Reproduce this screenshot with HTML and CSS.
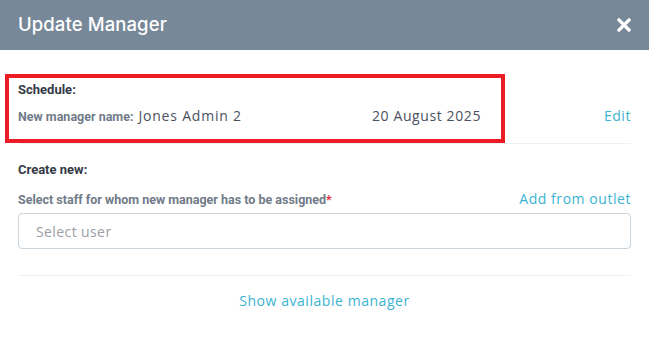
FILE: index.html
```html
<!DOCTYPE html>
<html lang="en">
<head>
    <meta charset="UTF-8">
    <title>Update Manager</title>
    <link rel="stylesheet" href="styles.css">
</head>
<body>
    <div class="modal">
        <div class="modal-header">
            <h2>Update Manager</h2>
            <button class="close-btn" aria-label="Close">
                <svg width="14" height="14" viewBox="0 0 14 14">
                    <path d="M2 2 L12 12 M12 2 L2 12" stroke="#fff" stroke-width="3.2" stroke-linecap="square"/>
                </svg>
            </button>
        </div>
        <div class="modal-body">
            <div class="schedule">
                <div class="highlight"></div>
                <div class="section-title">Schedule:</div>
                <div class="schedule-row">
                    <div class="schedule-info">
                        <span class="label">New manager name:</span>
                        <span class="value">Jones Admin 2</span>
                    </div>
                    <span class="value date">20 August 2025</span>
                    <a href="#" class="link edit-link">Edit</a>
                </div>
            </div>

            <div class="create">
                <div class="section-title">Create new:</div>
                <div class="field-head">
                    <span class="label">Select staff for whom new manager has to be assigned<span class="req">*</span></span>
                    <a href="#" class="link">Add from outlet</a>
                </div>
                <input type="text" class="user-select" placeholder="Select user">
            </div>

            <div class="footer">
                <a href="#" class="link">Show available manager</a>
            </div>
        </div>
    </div>
</body>
</html>
```

FILE: styles.css
```css
* {
    box-sizing: border-box;
}

body {
    margin: 0;
    font-family: Roboto, "Liberation Sans", sans-serif;
    background-color: #fff;
}

.modal {
    width: 649px;
    height: 337px;
    background-color: #fff;
}

.modal-header {
    height: 50px;
    background-color: #778899;
    display: flex;
    align-items: center;
    justify-content: space-between;
    padding: 0 18px 0 18px;
}

.modal-header h2 {
    margin: 0;
    margin-top: -2px;
    font-family: Inter, Roboto, sans-serif;
    font-size: 18.5px;
    font-weight: 500;
    color: #fff;
    letter-spacing: 0.1px;
}

.close-btn {
    background: none;
    border: none;
    padding: 0;
    display: flex;
    cursor: pointer;
}

.modal-body {
    padding: 0 18px;
}

.schedule {
    position: relative;
    padding-top: 32px;
    padding-bottom: 18px;
    border-bottom: 1px solid #edf2f7;
}

.highlight {
    position: absolute;
    left: -13px;
    top: 24px;
    width: 500px;
    height: 69px;
    border: 4px solid #ed1c24;
    pointer-events: none;
}

.section-title {
    font-size: 13px;
    font-weight: 700;
    color: #343a46;
    line-height: 16px;
}

.schedule-row {
    display: flex;
    align-items: baseline;
    margin-top: 8px;
}

.schedule-info {
    width: 354px;
}

.label {
    font-size: 12.5px;
    font-weight: 700;
    color: #717b88;
}

.req {
    color: #ef3340;
}

.value {
    font-family: "Open Sans", sans-serif;
    font-size: 14px;
    color: #4a5161;
    letter-spacing: 0.8px;
    margin-left: 1px;
}

.date {
    margin-left: 0;
    letter-spacing: 0.6px;
}

.link {
    font-family: "Open Sans", sans-serif;
    font-size: 14px;
    color: #3ab4d1;
    text-decoration: none;
    letter-spacing: 0.55px;
}

.edit-link {
    margin-left: auto;
}

.create {
    padding-top: 18px;
    padding-bottom: 26px;
    border-bottom: 1px solid #edf2f7;
}

.field-head {
    display: flex;
    justify-content: space-between;
    align-items: baseline;
    margin-top: 11px;
}

.user-select {
    display: block;
    width: 100%;
    height: 36px;
    margin-top: 5px;
    border: 1px solid #c9d3dc;
    border-radius: 4px;
    padding: 0 17px;
    font-family: "Open Sans", sans-serif;
    font-size: 14px;
    letter-spacing: 0.4px;
}

.user-select::placeholder {
    color: #9a9ea6;
}

.footer {
    text-align: center;
    padding-top: 15px;
}
```
